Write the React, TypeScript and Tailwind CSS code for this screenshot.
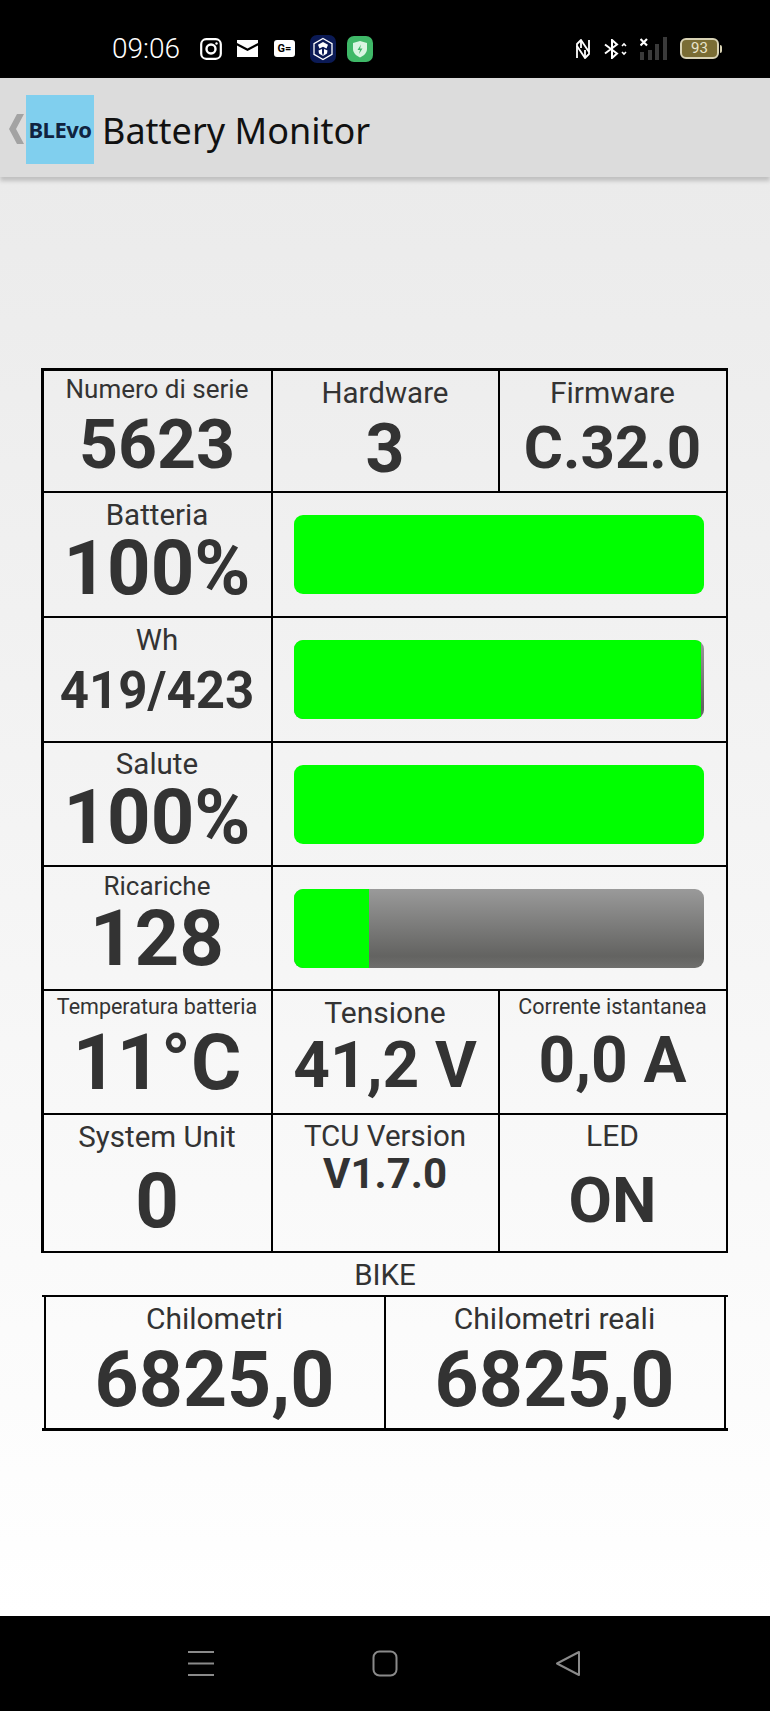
import React from 'react';

const Cell = ({ label, value, labelCls, valueCls, className = '' }: { label: string; value: string; labelCls: string; valueCls: string; className?: string }) => (
  <div className={`flex flex-col items-center overflow-hidden whitespace-nowrap border-black text-[#333] ${className}`}>
    <div className={`font-normal ${labelCls}`}>{label}</div>
    <div className={`font-bold ${valueCls}`}>{value}</div>
  </div>
);

const Bar = ({ percent, className = '' }: { percent: number; className?: string }) => (
  <div className={`col-span-2 flex items-center justify-center border-black ${className}`}>
    <div className="h-[79px] w-[410px] overflow-hidden rounded-[9px] bg-gradient-to-b from-[#9a9a9a] via-[#636361] via-85% to-[#6f6f6d]">
      <div className="h-full bg-[#00ff00]" style={{ width: `${percent}%` }} />
    </div>
  </div>
);

const StatusBar = () => (
  <div className="flex h-[78px] shrink-0 items-center bg-black pt-[19px] text-white">
    <span className="ml-[112px] w-[88px] text-[28px] leading-none font-light">09:06</span>
    <svg width="22" height="22" viewBox="0 0 22 22" fill="none" stroke="#fff">
      <rect x="1.2" y="1.2" width="19.6" height="19.6" rx="5" strokeWidth="2.2" />
      <circle cx="11" cy="11" r="4.5" strokeWidth="2.4" />
      <circle cx="16.5" cy="5.5" r="1.2" fill="#fff" stroke="none" />
    </svg>
    <svg className="ml-[15px]" width="21" height="17" viewBox="0 0 21 17">
      <path d="M0 0 H21 V3 L10.5 8.5 L0 3 Z" fill="#fff" />
      <path d="M0 5.5 L10.5 11 L21 5.5 V17 H0 Z" fill="#fff" />
    </svg>
    <div className="ml-[16px] flex h-[17px] w-[21px] items-center justify-center rounded-[3px] bg-white text-[11px] leading-none font-bold text-black">G=</div>
    <svg className="ml-[15px]" width="26" height="28" viewBox="0 0 26 28">
      <rect x="0" y="0" width="26" height="28" rx="7" fill="#0b1a55" />
      <path d="M13 3.5 L22 8.7 L22 19.3 L13 24.5 L4 19.3 L4 8.7 Z" fill="none" stroke="#fff" strokeWidth="1.3" />
      <path d="M13 7 L18 9.8 L16.5 13.5 L13 11.8 L9.5 13.5 L8 9.8 Z M8.5 15.5 L12 14 L12 18 L13 21 L9 18.5 Z M17.5 15.5 L14 14 L14 18 L13 21 L17 18.5 Z" fill="#fff" />
    </svg>
    <svg className="ml-[11px]" width="26" height="26" viewBox="0 0 26 26">
      <rect width="26" height="26" rx="7" fill="#3fb868" />
      <path d="M13 5 L20 7 L20 13 C20 17 16.5 20 13 21.5 C9.5 20 6 17 6 13 L6 7 Z" fill="#d9f5e2" />
      <path d="M14 8.5 L10.5 14 L13 14 L12 18 L15.5 12.5 L13 12.5 Z" fill="#3fb868" />
    </svg>
    <svg className="ml-[203px]" width="14" height="20" viewBox="0 0 14 20" fill="none" stroke="#fff" strokeWidth="1.8" strokeLinejoin="round">
      <path d="M1 5 L5 1 L13 13 L13 15 L9 19 L1 7 Z" />
      <path d="M5 1 L5 9 M9 19 L9 11 M13 13 L13 1 M1 7 L1 19" />
    </svg>
    <svg className="ml-[14px]" width="23" height="20" viewBox="0 0 23 20" fill="none" stroke="#fff" strokeWidth="2">
      <path d="M1 5.5 L13 14.5 L8 19 L8 1 L13 5.5 L1 14.5" />
      <path d="M18 7 L20 5 L22 7 M18 13 L20 15 L22 13" strokeWidth="1.6" />
    </svg>
    <svg className="ml-[13px]" width="27" height="23" viewBox="0 0 27 23">
      <path d="M0.5 2 L7 8.5 M7 2 L0.5 8.5" stroke="#fff" strokeWidth="2.2" />
      <rect x="0" y="15" width="4" height="8" fill="#3a3a3a" />
      <rect x="8" y="13" width="4" height="10" fill="#3a3a3a" />
      <rect x="15" y="7" width="4" height="16" fill="#3a3a3a" />
      <rect x="23" y="0" width="4" height="23" fill="#3a3a3a" />
    </svg>
    <div className="ml-[13px] flex h-[21px] w-[39px] items-center justify-center rounded-[6px] border-2 border-[#d8d2b4] bg-[#7a6d35] text-[15px] leading-none text-[#e8e4cc]">93</div>
    <div className="ml-px h-[8px] w-[2px] rounded-r-sm bg-[#d8d2b4]" />
  </div>
);

const NavBar = () => (
  <div className="flex h-[95px] shrink-0 items-start bg-black pt-[34px]">
    <svg className="ml-[188px]" width="26" height="27" viewBox="0 0 26 27" stroke="#8a8a8a" strokeWidth="2">
      <path d="M0 2 H26 M0 13.5 H26 M0 25 H26" />
    </svg>
    <svg className="ml-[158px]" width="26" height="27" viewBox="0 0 26 27" fill="none" stroke="#8a8a8a" strokeWidth="2">
      <rect x="1.5" y="1.5" width="23" height="24" rx="6" />
    </svg>
    <svg className="ml-[157px]" width="26" height="27" viewBox="0 0 26 27" fill="none" stroke="#8a8a8a" strokeWidth="2" strokeLinejoin="round">
      <path d="M24 2 L24 25 L2 13.5 Z" />
    </svg>
  </div>
);

const App = () => {
  return (
    <div className="flex h-[1711px] w-[770px] flex-col overflow-hidden bg-black font-['Roboto',sans-serif]">
      <StatusBar />

      <div className="relative z-10 flex h-[99px] shrink-0 items-center bg-[#dcdcdc] pt-[3px] shadow-[0_4px_4px_#c0c0c0]">
        <svg className="ml-[9px] shrink-0" width="15" height="30" viewBox="0 0 15 30">
          <path d="M15 0 L7 15 L15 30 L8 30 L0 15 L8 0 Z" fill="#a3a3a3" />
        </svg>
        <div className="ml-[2px] flex h-[69px] w-[68px] items-center justify-center bg-[#80cfee] font-['Noto_Sans',sans-serif] text-[22px] font-bold tracking-[-0.5px] text-[#10233f]">BLEvo</div>
        <span className="mt-[3px] ml-[8px] font-['Noto_Sans',sans-serif] text-[36px] leading-none text-[#111]">Battery Monitor</span>
      </div>

      <div className="flex min-h-0 flex-1 flex-col items-center bg-gradient-to-b from-[#ebebeb] to-white pt-[191px]">
        <div className="ml-[-2px] grid w-[687px] grid-cols-[229px_227px_226px] grid-rows-[122px_125px_125px_124px_124px_124px_136px] border-[3px] border-r-2 border-b-2 border-black">
          <Cell label="Numero di serie" value="5623" labelCls="mt-[4px] text-[26px] leading-[28px]" valueCls="mt-[4px] text-[68px] leading-[76px]" className="border-r-2 border-b-2" />
          <Cell label="Hardware" value="3" labelCls="mt-[6px] text-[29.5px] leading-[32px]" valueCls="mt-[2px] text-[68px] leading-[76px]" className="border-r-2 border-b-2" />
          <Cell label="Firmware" value="C.32.0" labelCls="mt-[6px] text-[30px] leading-[32px]" valueCls="mt-[1px] text-[60px] leading-[76px]" className="border-b-2" />

          <Cell label="Batteria" value="100%" labelCls="mt-[6px] text-[29.5px] leading-[32px]" valueCls="text-[76px] leading-[74px]" className="border-r-2 border-b-2" />
          <Bar percent={100} className="border-b-2" />

          <Cell label="Wh" value="419/423" labelCls="mt-[6px] text-[29.5px] leading-[32px]" valueCls="mt-[5px] text-[51px] leading-[60px]" className="border-r-2 border-b-2" />
          <Bar percent={99.2} className="border-b-2" />

          <Cell label="Salute" value="100%" labelCls="mt-[5px] text-[29.5px] leading-[32px]" valueCls="text-[76px] leading-[74px]" className="border-r-2 border-b-2" />
          <Bar percent={100} className="border-b-2" />

          <Cell label="Ricariche" value="128" labelCls="mt-[4px] text-[26px] leading-[30px]" valueCls="text-[78px] leading-[76px]" className="border-r-2 border-b-2" />
          <Bar percent={18.3} className="border-b-2" />

          <Cell label="Temperatura batteria" value="11°C" labelCls="mt-[3px] text-[21.5px] leading-[26px]" valueCls="mt-[1px] text-[77px] leading-[84px]" className="border-r-2 border-b-2" />
          <Cell label="Tensione" value="41,2 V" labelCls="mt-[6px] text-[30px] leading-[32px]" valueCls="mt-[1px] text-[64px] leading-[72px]" className="border-r-2 border-b-2" />
          <Cell label="Corrente istantanea" value="0,0 A" labelCls="mt-[3px] text-[21.5px] leading-[26px]" valueCls="mt-[5px] text-[64px] leading-[72px]" className="border-b-2" />

          <Cell label="System Unit" value="0" labelCls="mt-[6px] text-[29.5px] leading-[32px]" valueCls="mt-[8px] text-[76px] leading-[80px]" className="border-r-2" />
          <Cell label="TCU Version" value="V1.7.0" labelCls="mt-[5px] text-[29.5px] leading-[32px]" valueCls="text-[42px] leading-[44px]" className="border-r-2" />
          <Cell label="LED" value="ON" labelCls="mt-[5px] text-[30px] leading-[32px]" valueCls="mt-[9px] text-[63px] leading-[80px]" />
        </div>

        <div className="mt-[6px] text-[29.5px] leading-[32px] text-[#333]">BIKE</div>

        <div className="mt-[4px] ml-[-1px] grid h-[136px] w-[686px] grid-cols-[342px_340px] border-t-2 border-b-[3px] border-black px-[2px]">
          <Cell label="Chilometri" value="6825,0" labelCls="mt-[6px] text-[30px] leading-[32px]" valueCls="mt-[3px] text-[77px] leading-[84px]" className="border-x-2" />
          <Cell label="Chilometri reali" value="6825,0" labelCls="mt-[6px] text-[30px] leading-[32px]" valueCls="mt-[3px] text-[77px] leading-[84px]" className="border-r-2" />
        </div>
      </div>

      <NavBar />
    </div>
  );
};

export default App;
